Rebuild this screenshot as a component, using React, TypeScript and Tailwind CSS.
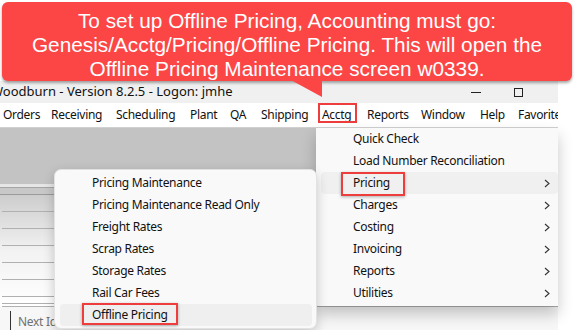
import React from "react";

const Chevron = () => (
  <svg width="6" height="9" viewBox="0 0 6 9" className="block">
    <path d="M1 1 L5 4.5 L1 8" fill="none" stroke="#333" strokeWidth="1.1" />
  </svg>
);

const acctgItems = [
  { label: "Quick Check", sub: false },
  { label: "Load Number Reconciliation", sub: false },
  { label: "Pricing", sub: true, hl: true },
  { label: "Charges", sub: true },
  { label: "Costing", sub: true },
  { label: "Invoicing", sub: true },
  { label: "Reports", sub: true },
  { label: "Utilities", sub: true },
];

const pricingItems = [
  "Pricing Maintenance",
  "Pricing Maintenance Read Only",
  "Freight Rates",
  "Scrap Rates",
  "Storage Rates",
  "Rail Car Fees",
  "Offline Pricing",
];

const menu = [
  { t: "Orders", w: "w-[48px]" },
  { t: "Receiving", w: "w-[65px]" },
  { t: "Scheduling", w: "w-[74px]" },
  { t: "Plant", w: "w-[40px]" },
  { t: "QA", w: "w-[31px]" },
  { t: "Shipping", w: "w-[61px]" },
  { t: "Acctg", w: "w-[45px]", box: true },
  { t: "Reports", w: "w-[54px]" },
  { t: "Window", w: "w-[59px]" },
  { t: "Help", w: "w-[38px]" },
  { t: "Favorites", w: "w-[60px]" },
];

export default function App() {
  return (
    <div className="relative w-[576px] h-[330px] overflow-hidden bg-white font-['Noto_Sans',sans-serif] text-[12px] tracking-[-0.3px] text-[#111]">
      {/* Callout */}
      <div className="relative h-[81px] pt-[2px] pl-[2px] z-20">
        <div className="w-[570px] h-[79px] rounded-[6px] bg-[#fc4646] shadow-[0_2px_3px_rgba(0,0,0,0.35)] pt-[7px] text-center text-white font-['Liberation_Sans',Arial,sans-serif] text-[20.8px] leading-[24px] tracking-normal">
          <div>To set up Offline Pricing, Accounting must go:</div>
          <div>Genesis/Acctg/Pricing/Offline Pricing. This will open the</div>
          <div>Offline Pricing Maintenance screen w0339.</div>
        </div>
        <svg className="absolute left-[289px] top-[79px]" width="34" height="20" viewBox="0 0 34 20">
          <polygon points="0,0 33,0 33,18" fill="#fc4646" />
        </svg>
      </div>

      {/* Title bar */}
      <div className="flex items-center h-[22px] w-[558px] bg-[#f0f0f0]">
        <span className="-ml-[9px] whitespace-nowrap text-[13px] tracking-normal">Woodburn - Version 8.2.5 - Logon: jmhe</span>
        <div className="ml-auto flex items-center">
          <div className="w-[10px] h-px bg-[#222] mr-[33px]" />
          <div className="w-[9px] h-[9px] border border-[#222] mr-[35px]" />
        </div>
      </div>

      {/* Menu bar */}
      <div className="flex items-center h-[25px] w-[558px] bg-white border-b border-[#d0d0d0] overflow-hidden">
        <div className="flex items-center pl-[3px]">
          {menu.map((m) => (
            <div key={m.t} className={`relative shrink-0 whitespace-nowrap ${m.w}`}>
              {m.t}
              {m.box && (
                <div className="absolute -left-[4px] -top-[3px] w-[39px] h-[20px] border-[2.5px] border-[#ee3d3d]" />
              )}
            </div>
          ))}
        </div>
      </div>

      {/* Body */}
      <div className="relative h-[203px]">
        <div className="w-[558px] flex flex-col">
          <div className="h-[56px] bg-[#c3c3c3]" />
          <div className="h-[3px] bg-[#e6e6e6]" />
          <div className="h-px bg-[#a5a5a5]" />
          <div className="h-[6px] bg-[#c8c8c8]" />
          <div className="h-px bg-[#9a9a9a]" />
          <div className="bg-gradient-to-b from-[#cdcdcd] via-[#f2f2f2] to-white">
            {[0, 1, 2, 3, 4, 5].map((i) => (
              <div key={i} className="h-[17px] border-b border-[#b0b0b0] ml-[2px]" />
            ))}
            <div className="h-[7px] border-b border-[#b0b0b0] ml-[2px]" />
            <div className="h-[3px] border-b border-[#b0b0b0] ml-[2px]" />
          </div>
          <div className="h-[24px] flex bg-[#f7f7f7]">
            <div className="ml-[10px] mt-[4px] w-px h-[20px] bg-[#333]" />
            <div className="pl-[7px] pt-[8px] text-[#707070] leading-[14px]">Next Id</div>
          </div>
        </div>

        {/* Acctg dropdown */}
        <div className="absolute left-[316px] top-0 w-[242px] bg-[#f9f9f9] pb-[2px] shadow-[0_8px_14px_rgba(0,0,0,0.22)] z-10">
          {acctgItems.map((it) => (
            <div
              key={it.label}
              className={`relative h-[22px] ml-[5px] pl-[32px] pr-[8px] flex items-center rounded-[4px] ${it.hl ? "bg-[#f0f0f0]" : ""}`}
            >
              <span className="whitespace-nowrap">{it.label}</span>
              {it.sub && (
                <span className="ml-auto">
                  <Chevron />
                </span>
              )}
              {it.hl && (
                <div className="absolute left-[20px] top-0 w-[64px] h-[24px] border-[2.5px] border-[#ee3d3d] shadow-[0_1px_3px_rgba(0,0,0,0.3)]" />
              )}
            </div>
          ))}
        </div>

        {/* Pricing submenu */}
        <div className="absolute left-[54px] top-[41px] w-[263px] h-[160px] bg-[#f9f9f9] rounded-[7px] border border-[#e2e2e2] py-[2px] shadow-[0_4px_12px_rgba(0,0,0,0.2)] z-20">
          {pricingItems.map((p, i) => {
            const hl = i === pricingItems.length - 1;
            return (
              <div
                key={p}
                className={`relative h-[22px] ml-[5px] mr-[4px] pl-[32px] flex items-center rounded-[4px] ${hl ? "bg-[#efefef]" : ""}`}
              >
                <span className="whitespace-nowrap">{p}</span>
                {hl && (
                  <div className="absolute left-[22px] -top-px w-[96px] h-[22px] border-[2.5px] border-[#ee3d3d] shadow-[0_1px_3px_rgba(0,0,0,0.3)]" />
                )}
              </div>
            );
          })}
        </div>
      </div>
    </div>
  );
}
